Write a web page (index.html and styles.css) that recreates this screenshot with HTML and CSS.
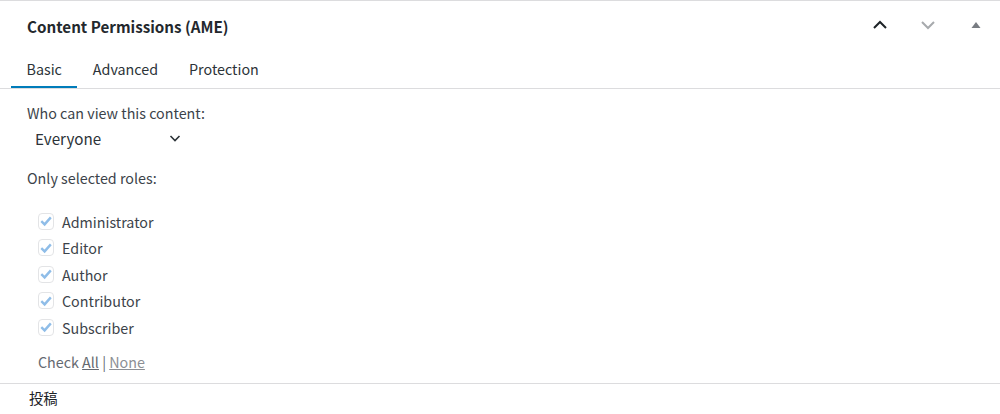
FILE: index.html
```html
<!DOCTYPE html>
<html lang="en">
<head>
<meta charset="utf-8">
<link rel="stylesheet" href="styles.css">
</head>
<body>
<div class="box">
  <div class="header">
    <h2 class="title">Content Permissions (AME)</h2>
    <div class="actions">
      <span class="act up"><svg width="20" height="20" viewBox="0 0 20 20"><path d="M4 13 L10 7 L16 13" fill="none" stroke="#1d2327" stroke-width="2"/></svg></span>
      <span class="act down"><svg width="20" height="20" viewBox="0 0 20 20"><path d="M4 7 L10 13 L16 7" fill="none" stroke="#a7aaad" stroke-width="2"/></svg></span>
      <span class="act toggle"><svg width="12" height="12" viewBox="0 0 12 12"><path d="M1.5 9 L6 3 L10.5 9 Z" fill="#787c82"/></svg></span>
    </div>
  </div>
  <div class="tabs">
    <span class="tab active">Basic</span>
    <span class="tab">Advanced</span>
    <span class="tab">Protection</span>
  </div>
  <div class="content">
    <div class="label">Who can view this content:</div>
    <div class="select">
      <span>Everyone</span>
      <svg width="16" height="16" viewBox="0 0 16 16"><path d="M3.5 6 L8 10.5 L12.5 6" fill="none" stroke="#2c3338" stroke-width="1.6"/></svg>
    </div>
    <div class="label roles-label">Only selected roles:</div>
    <ul class="roles">
      <li><span class="cb"><svg width="14" height="14" viewBox="0 0 14 14"><path d="M2.3 7.2 L5.6 10.4 L11.8 3.4" fill="none" stroke="#8fbde8" stroke-width="2.4"/></svg></span>Administrator</li>
      <li><span class="cb"><svg width="14" height="14" viewBox="0 0 14 14"><path d="M2.3 7.2 L5.6 10.4 L11.8 3.4" fill="none" stroke="#8fbde8" stroke-width="2.4"/></svg></span>Editor</li>
      <li><span class="cb"><svg width="14" height="14" viewBox="0 0 14 14"><path d="M2.3 7.2 L5.6 10.4 L11.8 3.4" fill="none" stroke="#8fbde8" stroke-width="2.4"/></svg></span>Author</li>
      <li><span class="cb"><svg width="14" height="14" viewBox="0 0 14 14"><path d="M2.3 7.2 L5.6 10.4 L11.8 3.4" fill="none" stroke="#8fbde8" stroke-width="2.4"/></svg></span>Contributor</li>
      <li><span class="cb"><svg width="14" height="14" viewBox="0 0 14 14"><path d="M2.3 7.2 L5.6 10.4 L11.8 3.4" fill="none" stroke="#8fbde8" stroke-width="2.4"/></svg></span>Subscriber</li>
    </ul>
    <div class="check">Check <a href="#">All</a> | <a href="#">None</a></div>
  </div>
</div>
<div class="next">投稿</div>
</body>
</html>
```
FILE: styles.css
```css
html, body {
  margin: 0;
  padding: 0;
  background: #fff;
}
body {
  font-family: "Noto Sans CJK JP", "Noto Sans", sans-serif;
  color: #3c434a;
  font-size: 14.3px;
}
.box {
  border-top: 1px solid #dcdcde;
  border-bottom: 1px solid #dcdcde;
}
.header {
  display: flex;
  align-items: flex-start;
  justify-content: space-between;
  height: 51px;
}
.title {
  margin: 0;
  padding: 14px 0 0 27px;
  line-height: 22px;
  font-size: 15.2px;
  font-weight: 600;
  color: #23282d;
}
.actions {
  display: flex;
  align-items: center;
}
.act {
  display: flex;
  align-items: center;
  justify-content: center;
  width: 48px;
  height: 47px;
}
.tabs {
  display: flex;
  padding-left: 11px;
  border-bottom: 1px solid #dcdcde;
  height: 37px;
  box-sizing: border-box;
}
.tab {
  padding: 0 15.5px;
  line-height: 34px;
  color: #2c3338;
  border-bottom: 2px solid transparent;
}
.tab.active {
  border-bottom-color: #007cba;
}
.content {
  padding: 14px 27px 11px;
}
.label {
  line-height: 20px;
}
.select {
  display: flex;
  align-items: center;
  justify-content: space-between;
  width: 148px;
  padding: 0 8px;
  height: 32px;
  margin-top: -1px;
  color: #2c3338;
  font-size: 15.2px;
}
.roles-label {
  margin-top: 14px;
}
.roles {
  list-style: none;
  margin: 20px 0 0;
  padding: 0 0 0 11px;
}
.roles li {
  display: flex;
  align-items: center;
  height: 26.5px;
}
.cb {
  display: inline-flex;
  align-items: center;
  justify-content: center;
  width: 14px;
  height: 15px;
  border: 1px solid #e3e4e6;
  border-radius: 4px;
  margin-right: 8px;
}
.check {
  margin-top: 11px;
  padding-left: 11px;
  line-height: 20px;
  color: #646970;
}
.check a {
  color: #8c8f94;
}
.check a:first-child {
  color: #646970;
}
.next {
  padding-left: 29px;
  line-height: 27px;
  color: #1d2327;
}
```
